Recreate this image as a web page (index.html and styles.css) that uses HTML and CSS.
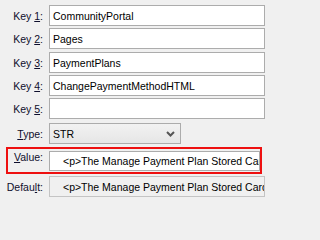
FILE: index.html
```
<!DOCTYPE html>
<html>
<head>
<meta charset="utf-8">
<link rel="stylesheet" href="styles.css">
</head>
<body>
<div class="form">
  <div class="row r1"><label class="lbl">Key <u>1</u>:</label><div class="field">CommunityPortal</div></div>
  <div class="row r2"><label class="lbl">Key <u>2</u>:</label><div class="field">Pages</div></div>
  <div class="row r3"><label class="lbl">Key <u>3</u>:</label><div class="field">PaymentPlans</div></div>
  <div class="row r4"><label class="lbl">Key <u>4</u>:</label><div class="field">ChangePaymentMethodHTML</div></div>
  <div class="row r5"><label class="lbl">Key <u>5</u>:</label><div class="field"></div></div>
  <div class="row r6"><label class="lbl"><u>T</u>ype:</label>
    <div class="combo"><span>STR</span>
      <svg class="chev" width="9" height="6" viewBox="0 0 9 6"><path d="M1 1 L4.5 4.5 L8 1" fill="none" stroke="#555" stroke-width="2"/></svg>
    </div>
  </div>
  <div class="row r7 highlight"><label class="lbl"><u>V</u>alue:</label><div class="field long">&lt;p&gt;The Manage Payment Plan Stored Card</div></div>
  <div class="row r8"><label class="lbl">Defau<u>l</u>t:</label><div class="field long readonly">&lt;p&gt;The Manage Payment Plan Stored Card</div></div>
</div>
</body>
</html>
```
FILE: styles.css
```
* { box-sizing: border-box; }
html, body { margin: 0; padding: 0; }
body {
  background: #f0f0f0;
  font-family: "Liberation Sans", Arial, sans-serif;
  font-size: 10.5px;
  width: 271px;
  height: 202px;
  overflow: hidden;
}
.form {
  display: flex;
  flex-direction: column;
  padding-top: 5px;
}
.row {
  display: grid;
  grid-template-columns: 49px 216px;
  align-items: center;
  height: 21px;
}
.r2 { margin-top: 2px; }
.r3 { margin-top: 3px; }
.r4 { margin-top: 2px; }
.r5 { margin-top: 2px; }
.r6 { margin-top: 4px; grid-template-columns: 49px 132px; }
.r7 { margin-top: 3px; }
.r8 { margin-top: 2px; }
.lbl {
  text-align: right;
  padding-right: 6px;
  color: #0e0e2c;
  white-space: nowrap;
}
.lbl u { text-underline-offset: 1px; }
.field {
  height: 21px;
  border: 1px solid #acacac;
  background: #fff;
  color: #000;
  padding-left: 3px;
  display: flex;
  align-items: center;
  white-space: nowrap;
  overflow: hidden;
}
.field.long { padding-left: 13px; }
.field.readonly {
  background: #f0f0f0;
  border-color: #c4c4c4;
}
.combo {
  height: 21px;
  border: 1px solid #acacac;
  background: linear-gradient(#f2f2f2, #e6e6e6);
  color: #000;
  padding-left: 3px;
  padding-right: 5px;
  display: flex;
  align-items: center;
  justify-content: space-between;
}
.chev { display: block; }
.highlight {
  margin-left: 6px;
  width: 256px;
  height: 27px;
  border: 2px solid #ee1010;
  grid-template-columns: 41px 211px;
  align-items: start;
  padding-top: 2px;
}
.highlight .field { height: 20px; }
```
